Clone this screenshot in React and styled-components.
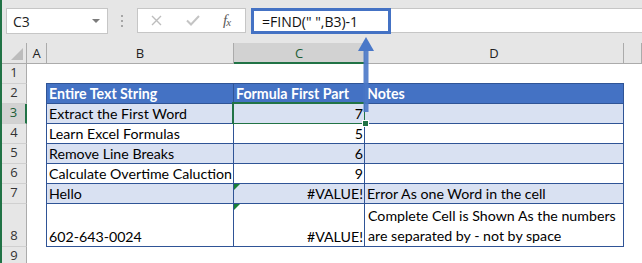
import React from "react";
import styled, { createGlobalStyle } from "styled-components";

const GlobalStyle = createGlobalStyle`
    html, body {
        margin: 0;
        padding: 0;
        background: #ffffff;
        overflow: hidden;
    }
`;

const Window = styled.div`
    position: relative;
    width: 640px;
    height: 263px;
    border-left: 2px solid #217346;
    background: #ffffff;
    overflow: hidden;
    font-family: "Open Sans", "Noto Sans", sans-serif;
`;

const Toolbar = styled.div`
    display: flex;
    align-items: flex-start;
    height: 43px;
    padding: 8px 0 0 4px;
    box-sizing: border-box;
    background: #e6e6e6;
`;

const NameBox = styled.div`
    display: flex;
    align-items: center;
    justify-content: space-between;
    width: 102px;
    height: 26px;
    box-sizing: border-box;
    padding: 0 7px 0 6px;
    background: #ffffff;
    border: 1px solid #c6c6c6;
    font-size: 14px;
    color: #222;
`;

const Caret = styled.span`
    width: 0;
    height: 0;
    border-left: 4px solid transparent;
    border-right: 4px solid transparent;
    border-top: 4px solid #7b7b7b;
`;

const Grip = styled.div`
    display: flex;
    flex-direction: column;
    gap: 3px;
    margin: 7px 0 0 13px;

    i {
        display: block;
        width: 2px;
        height: 2px;
        background: #a6a6a6;
    }
`;

const FxButtons = styled.div`
    display: flex;
    align-items: center;
    width: 109px;
    height: 25px;
    box-sizing: border-box;
    margin-left: 14px;
    padding-left: 13px;
    background: #ffffff;
    border: 1px solid #c6c6c6;
`;

const Fx = styled.span`
    margin-left: 23px;
    font-family: "Liberation Serif", "DejaVu Serif", serif;
    font-style: italic;
    font-size: 15px;
    color: #5a5a5a;
    letter-spacing: -1px;

    sub {
        font-size: 11px;
        vertical-align: -1px;
    }
`;

const FormulaBar = styled.div`
    flex: 1;
    height: 25px;
    box-sizing: border-box;
    margin-left: 5px;
    background: #ffffff;
    border-top: 1px solid #c6c6c6;
    border-bottom: 1px solid #c6c6c6;
`;

const FormulaInput = styled.div`
    display: flex;
    align-items: center;
    width: 140px;
    height: 26px;
    box-sizing: border-box;
    margin-top: -1px;
    padding-left: 8px;
    border: 3px solid #4472c4;
    font-size: 14px;
    color: #111;
    white-space: pre;
`;

const HeaderBar = styled.div`
    display: flex;
    height: 21px;
    background: #e6e6e6;
`;

const ColHead = styled.div`
    display: flex;
    align-items: center;
    justify-content: center;
    box-sizing: border-box;
    width: ${(p) => (p.$w ? `${p.$w}px` : "auto")};
    flex: ${(p) => (p.$w ? "none" : "1")};
    border-right: 1px solid #ababab;
    border-bottom: ${(p) => (p.$active ? "2px solid #217346" : "1px solid #ababab")};
    background: ${(p) => (p.$active ? "#d2d2d2" : "transparent")};
    color: ${(p) => (p.$active ? "#1c5e37" : "#222")};
    font-size: 13px;
`;

const Corner = styled.div`
    position: relative;
    width: 25px;
    box-sizing: border-box;
    border-right: 1px solid #ababab;
    border-bottom: 1px solid #ababab;

    &::after {
        content: "";
        position: absolute;
        right: 3px;
        bottom: 3px;
        border-left: 12px solid transparent;
        border-bottom: 12px solid #bcbcbc;
    }
`;

const Body = styled.div`
    display: flex;
`;

const RowHeads = styled.div`
    display: flex;
    flex-direction: column;
    width: 25px;
`;

const RowHead = styled.div`
    display: flex;
    align-items: flex-end;
    justify-content: center;
    height: ${(p) => p.$h}px;
    box-sizing: border-box;
    padding-bottom: 3px;
    background: ${(p) => (p.$active ? "#d2d2d2" : "#e6e6e6")};
    border-bottom: 1px solid #d0d0d0;
    border-right: ${(p) => (p.$active ? "2px solid #217346" : "1px solid #ababab")};
    color: ${(p) => (p.$active ? "#1c5e37" : "#333")};
    font-size: 13px;
    line-height: 16px;
`;

const Canvas = styled.div`
    flex: 1;
    padding: 19px 0 0 19px;
`;

const Table = styled.div`
    display: grid;
    grid-template-columns: 186px 130px 258px;
    grid-template-rows: repeat(6, 19px) 42px;
    gap: 1px;
    width: fit-content;
    background: #2f5496;
    border: 1px solid #2f5496;
    font-family: "Lato", "Liberation Sans", sans-serif;
    font-size: 14.2px;
`;

const Cell = styled.div`
    position: relative;
    display: flex;
    align-items: flex-end;
    justify-content: ${(p) => (p.$right ? "flex-end" : "flex-start")};
    padding: ${(p) => (p.$right ? "0 1px 0 0" : "0 0 0 2px")};
    background: ${(p) =>
        p.$head ? "#4472c4" : p.$band ? "#d9e1f2" : "#ffffff"};
    color: ${(p) => (p.$head ? "#ffffff" : "#000000")};
    font-weight: ${(p) => (p.$head ? 700 : 400)};
    line-height: 19px;
    white-space: nowrap;

    ${(p) =>
        p.$wrap &&
        `
        white-space: normal;
        line-height: 20px;
        padding-left: 3px;
    `}

    ${(p) =>
        p.$flag &&
        `
        &::before {
            content: "";
            position: absolute;
            left: 0;
            top: 0;
            border-top: 6px solid #1a7f37;
            border-right: 6px solid transparent;
        }
    `}

    ${(p) =>
        p.$selected &&
        `
        &::after {
            content: "";
            position: absolute;
            inset: -2px -2px -2px -2px;
            border: 2px solid #217346;
            pointer-events: none;
        }
    `}
`;

const FillHandle = styled.span`
    position: absolute;
    right: -5px;
    bottom: -4px;
    width: 5px;
    height: 5px;
    background: #217346;
    border: 1px solid #ffffff;
    z-index: 2;
`;

const Arrow = styled.svg`
    position: absolute;
    left: 354px;
    top: 36px;
    z-index: 3;
`;

const rows = [
    { b: "Extract the First Word", c: "7", band: true, selected: true },
    { b: "Learn Excel Formulas", c: "5" },
    { b: "Remove Line Breaks", c: "6", band: true },
    { b: "Calculate Overtime Caluction", c: "9" },
    { b: "Hello", c: "#VALUE!", d: "Error As one Word in the cell", band: true, flag: true },
    {
        b: "602-643-0024",
        c: "#VALUE!",
        d: "Complete Cell is Shown As the numbers are separated by - not by space",
        flag: true,
        wrap: true,
    },
];

const rowHeights = [20, 20, 20, 20, 20, 20, 20, 43, 20];

function App() {
    return (
        <>
            <GlobalStyle />
            <Window>
                <Toolbar>
                    <NameBox>
                        <span>C3</span>
                        <Caret />
                    </NameBox>
                    <Grip>
                        <i />
                        <i />
                        <i />
                    </Grip>
                    <FxButtons>
                        <svg width="11" height="11" viewBox="0 0 11 11">
                            <path d="M1 1 L10 10 M10 1 L1 10" stroke="#bdbdbd" strokeWidth="1.4" fill="none" />
                        </svg>
                        <svg width="14" height="11" viewBox="0 0 14 11" style={{ marginLeft: 24 }}>
                            <path d="M1 5.5 L5 9.5 L13 1" stroke="#c4c4c4" strokeWidth="2" fill="none" />
                        </svg>
                        <Fx>
                            f<sub>x</sub>
                        </Fx>
                    </FxButtons>
                    <FormulaBar>
                        <FormulaInput>=FIND(" ",B3)-1</FormulaInput>
                    </FormulaBar>
                </Toolbar>

                <HeaderBar>
                    <Corner />
                    <ColHead $w={20}>A</ColHead>
                    <ColHead $w={187}>B</ColHead>
                    <ColHead $w={131} $active>C</ColHead>
                    <ColHead $w={259}>D</ColHead>
                    <ColHead />
                </HeaderBar>

                <Body>
                    <RowHeads>
                        {rowHeights.map((h, i) => (
                            <RowHead key={i} $h={h} $active={i === 2}>
                                {i + 1}
                            </RowHead>
                        ))}
                    </RowHeads>
                    <Canvas>
                        <Table>
                            <Cell $head>Entire Text String</Cell>
                            <Cell $head>Formula First Part</Cell>
                            <Cell $head>Notes</Cell>
                            {rows.map((r, i) => (
                                <React.Fragment key={i}>
                                    <Cell $band={r.band}>{r.b}</Cell>
                                    <Cell $band={r.band} $right $flag={r.flag} $selected={r.selected}>
                                        {r.c}
                                        {r.selected && <FillHandle />}
                                    </Cell>
                                    <Cell $band={r.band} $wrap={r.wrap}>
                                        {r.d || ""}
                                    </Cell>
                                </React.Fragment>
                            ))}
                        </Table>
                    </Canvas>
                </Body>

                <Arrow width="20" height="78" viewBox="0 0 20 78">
                    <rect x="7.5" y="13" width="5" height="63" fill="#4a78c8" opacity="0.9" />
                    <polygon points="2,15 10,1 18,15" fill="#4a78c8" />
                </Arrow>
            </Window>
        </>
    );
}

export default App;
